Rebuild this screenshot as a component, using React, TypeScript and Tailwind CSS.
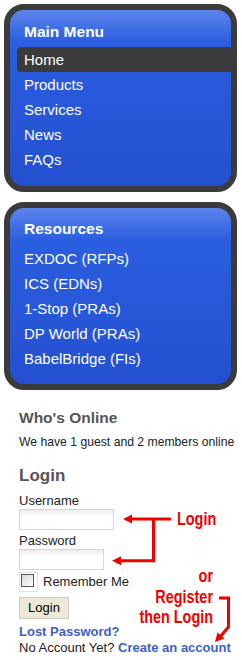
import React from 'react';

const mainMenu = ['Home', 'Products', 'Services', 'News', 'FAQs'];
const resources = ['EXDOC (RFPs)', 'ICS (EDNs)', '1-Stop (PRAs)', 'DP World (PRAs)', 'BabelBridge (FIs)'];

const MenuBox: React.FC<{ title: string; items: string[]; active?: string; className?: string }> = ({ title, items, active, className }) => (
  <div className={`ml-[4px] w-[233px] rounded-[20px] border-[6px] border-[#3b3b3b] bg-linear-to-b from-[#5c84ea] via-[#2b5ee0] via-[18%] to-[#2450d0] ${className ?? ''}`}>
    <div className="pl-[14px] text-[15.5px] font-bold leading-[20px] text-white">{title}</div>
    <ul className="mt-[5px]">
      {items.map((item) => (
        <li
          key={item}
          className={`ml-[7px] h-[25px] pl-[7px] text-[15px] leading-[25px] text-white ${item === active ? 'rounded-l-[4px] bg-[#3b3b3b]' : ''}`}
        >
          {item}
        </li>
      ))}
    </ul>
  </div>
);

export default function App() {
  return (
    <div className="relative w-[242px] h-[660px] bg-white pt-[4px] font-['Liberation_Sans',Arial,sans-serif]">
      <MenuBox title="Main Menu" items={mainMenu} active="Home" className="pt-[12px] pb-[14px]" />
      <MenuBox title="Resources" items={resources} className="mt-[10px] pt-[11px] pb-[13px] [&_ul]:mt-[7px]" />

      <div className="pl-[19px] pt-[18px]">
        <h3 className="text-[15.5px] font-bold leading-[20px] text-[#555]">Who's Online</h3>
        <p className="mt-[6px] text-[12.2px] leading-[16px] text-[#222]">We have 1 guest and 2 members online</p>

        <h3 className="mt-[16px] text-[17px] font-bold leading-[20px] text-[#555]">Login</h3>
        <div className="mt-[7px] text-[13px] leading-[16px] text-[#222]">Username</div>
        <div className="h-[21px] w-[95px] border border-[#d6d6d6] bg-linear-to-b from-[#ededed] to-white to-[40%]" />
        <div className="mt-[3px] text-[13px] leading-[16px] text-[#222]">Password</div>
        <div className="h-[21px] w-[85px] border border-[#d6d6d6] bg-linear-to-b from-[#ededed] to-white to-[40%]" />
        <div className="mt-[2px] flex items-center gap-[5px]">
          <span className="flex h-[20px] w-[19px] items-start border border-[#e2e2e2] bg-white p-[1px]">
            <span className="block h-[13px] w-[13px] border border-[#555] bg-linear-to-br from-[#d8d8d8] to-white" />
          </span>
          <span className="text-[13px] leading-[16px] text-[#222]">Remember Me</span>
        </div>
        <button className="mt-[5px] flex h-[22px] w-[50px] items-center justify-center border border-[#cfcdc0] bg-[#ece9d8] text-[13px] text-black">
          Login
        </button>
        <div className="mt-[5px] text-[13px] font-bold leading-[16px] text-[#3d5fc7]">Lost Password?</div>
        <div className="text-[13px] leading-[16px] text-[#222]">
          No Account Yet? <span className="font-bold text-[#3d5fc7]">Create an account</span>
        </div>
      </div>

      {/* red annotations */}
      <div className="absolute left-[177px] top-[509px] origin-left scale-x-[0.8] text-[18px] font-bold leading-[20px] text-[#f20000]">
        Login
      </div>
      <div className="absolute right-[29px] top-[566px] origin-right scale-x-[0.8] text-right text-[18px] font-bold leading-[20.5px] text-[#f20000]">
        <div>or</div>
        <div>Register</div>
        <div>then Login</div>
      </div>
      <svg className="pointer-events-none absolute left-0 top-0" width="242" height="660" viewBox="0 0 242 660">
        <g stroke="#f20000" strokeWidth="3" fill="none">
          <path d="M171 519 H129" />
          <path d="M153.5 519 V560.7 H119" />
          <path d="M219 598 H228.5 V627 L220 637" />
        </g>
        <g fill="#f20000">
          <polygon points="123,519 132,514.5 132,523.5" />
          <polygon points="112,560.7 121,556.2 121,565.2" />
          <polygon points="215,642 217.5,632.5 224.5,638.5" />
        </g>
      </svg>
    </div>
  );
}
